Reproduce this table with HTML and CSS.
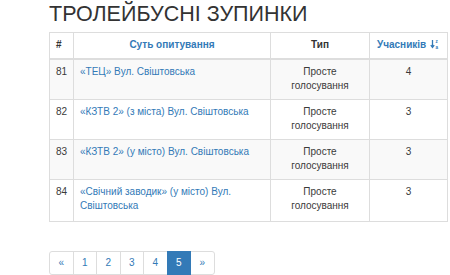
FILE: index.html
```html
<!DOCTYPE html>
<html lang="uk">
<head>
    <meta charset="UTF-8">
    <title>Тролейбусні зупинки</title>
    <link rel="stylesheet" href="styles.css">
</head>
<body>

<div class="container">
    <h2 class="page-title">ТРОЛЕЙБУСНІ ЗУПИНКИ</h2>

    <table class="polls">
        <colgroup>
            <col class="col-num">
            <col class="col-title">
            <col class="col-type">
            <col class="col-count">
        </colgroup>
        <thead>
            <tr>
                <th>#</th>
                <th class="center"><a href="#">Суть опитування</a></th>
                <th class="center">Тип</th>
                <th class="center">
                    <a href="#">Учасників
                        <svg class="sort-icon" width="10" height="10" viewBox="0 0 10 10">
                            <path d="M2.5 1v7M0.8 6.2l1.7 2.3 1.7-2.3" fill="none" stroke="#337ab7" stroke-width="1.3"/>
                            <text x="5.5" y="4.2" font-size="4.6" font-weight="bold" fill="#337ab7">z</text>
                            <text x="5.5" y="9.6" font-size="4.6" font-weight="bold" fill="#337ab7">a</text>
                        </svg>
                    </a>
                </th>
            </tr>
        </thead>
        <tbody>
            <tr>
                <td>81</td>
                <td><a href="#">«ТЕЦ» Вул. Свіштовська</a></td>
                <td class="center">Просте голосування</td>
                <td class="center">4</td>
            </tr>
            <tr>
                <td>82</td>
                <td><a href="#">«КЗТВ 2» (з міста) Вул. Свіштовська</a></td>
                <td class="center">Просте голосування</td>
                <td class="center">3</td>
            </tr>
            <tr>
                <td>83</td>
                <td><a href="#">«КЗТВ 2» (у місто) Вул. Свіштовська</a></td>
                <td class="center">Просте голосування</td>
                <td class="center">3</td>
            </tr>
            <tr>
                <td>84</td>
                <td><a href="#">«Свічний заводик» (у місто) Вул. Свіштовська</a></td>
                <td class="center">Просте голосування</td>
                <td class="center">3</td>
            </tr>
        </tbody>
    </table>

    <ul class="pagination">
        <li><a href="#">«</a></li>
        <li><a href="#">1</a></li>
        <li><a href="#">2</a></li>
        <li><a href="#">3</a></li>
        <li><a href="#">4</a></li>
        <li class="active"><a href="#">5</a></li>
        <li><a href="#">»</a></li>
    </ul>
</div>

</body>
</html>
```

FILE: styles.css
```css
* { box-sizing: border-box; }
body {
    margin: 0;
    font-family: "Liberation Sans", Arial, sans-serif;
    font-size: 10px;
    line-height: 14.5px;
    color: #3a3a3a;
    background: #fff;
}
a { color: #337ab7; text-decoration: none; }

.container { padding-left: 49px; }
.page-title {
    font-size: 21.5px; font-weight: normal; line-height: 23px;
    margin: 3px 0 6px; color: #333;
}

/* poll list */
.polls {
    width: 398px; table-layout: fixed;
    border-collapse: collapse; border: 1px solid #ddd;
}
.col-num { width: 24px; }
.col-title { width: 197px; }
.col-type { width: 99px; }
.col-count { width: 78px; }
.polls th, .polls td {
    border: 1px solid #ddd; padding: 5px 6px;
    text-align: left; vertical-align: top;
}
.polls thead th { border-bottom-width: 2px; vertical-align: bottom; font-weight: bold; color: #333; }
.polls tbody tr:nth-child(odd) { background: #f9f9f9; }
.polls tbody tr:last-child td { padding-bottom: 7px; }
.polls .center { text-align: center; }
.sort-icon { vertical-align: -1px; margin-left: 1px; }

/* pages */
.pagination {
    display: flex; list-style: none;
    margin: 29px 0 0; padding: 0;
}
.pagination li a {
    display: block; width: 24.5px; height: 24.5px;
    line-height: 22.5px; text-align: center;
    border: 1px solid #ddd; margin-left: -1px;
    background: #fff; color: #337ab7;
}
.pagination li:first-child a { margin-left: 0; border-radius: 3px 0 0 3px; }
.pagination li:last-child a { border-radius: 0 3px 3px 0; }
.pagination .active a { background: #337ab7; border-color: #337ab7; color: #fff; position: relative; }
```
